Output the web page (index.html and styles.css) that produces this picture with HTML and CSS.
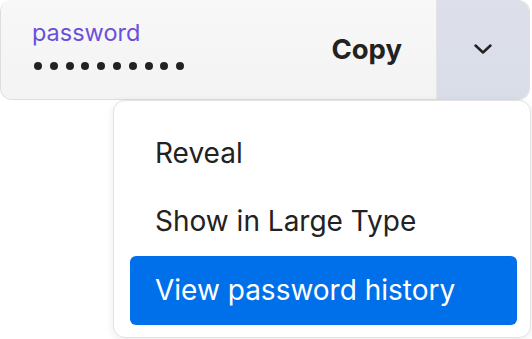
FILE: index.html
```html
<!DOCTYPE html>
<html lang="en">
<head>
    <meta charset="UTF-8">
    <title>Password field</title>
    <link rel="stylesheet" href="styles.css">
</head>
<body>
    <div class="field">
        <div class="field-main">
            <div class="field-text">
                <div class="field-label">password</div>
                <div class="field-dots">
                    <span></span><span></span><span></span><span></span><span></span>
                    <span></span><span></span><span></span><span></span><span></span>
                </div>
            </div>
            <div class="copy">Copy</div>
        </div>
        <div class="field-toggle">
            <svg width="20" height="12" viewBox="0 0 20 12">
                <path d="M2.5 2.5 L10 9.5 L17.5 2.5" fill="none" stroke="#222" stroke-width="2.5" stroke-linecap="round" stroke-linejoin="round"/>
            </svg>
        </div>
    </div>

    <div class="menu">
        <div class="menu-item">Reveal</div>
        <div class="menu-item">Show in Large Type</div>
        <div class="menu-item active">View password history</div>
    </div>
</body>
</html>
```

FILE: styles.css
```css
body {
    margin: 0;
    background-color: #fff;
    font-family: Inter, "Noto Sans", sans-serif;
    color: #222;
}
.field {
    display: flex;
    width: 530px;
    height: 100px;
    border: 1px solid #dedede;
    border-top: none;
    border-radius: 12px;
    overflow: hidden;
    box-sizing: border-box;
}
.field-main {
    flex: 1;
    display: flex;
    align-items: center;
    justify-content: space-between;
    padding: 0 34px 0 31px;
    background: linear-gradient(#f8f8f8, #f3f3f3);
    border-right: 1px solid #e4e4e4;
}
.field-label {
    color: #6b4fdb;
    font-size: 23.5px;
    line-height: 26px;
    margin-top: -10px;
}
.field-dots {
    display: flex;
    gap: 7.8px;
    margin-top: 16px;
    padding-left: 2px;
}
.field-dots span {
    width: 8px;
    height: 8px;
    border-radius: 50%;
    background-color: #222;
}
.copy {
    font-size: 27.5px;
    font-weight: 700;
    margin-top: -2px;
}
.field-toggle {
    width: 92px;
    display: flex;
    align-items: center;
    justify-content: center;
    background: linear-gradient(#dde0ea, #d9dde7);
    padding-bottom: 2px;
}
.menu {
    position: absolute;
    left: 113px;
    top: 100px;
    width: 418px;
    height: 238px;
    box-sizing: border-box;
    background-color: #fff;
    border: 1px solid #e2e2e2;
    border-radius: 12px;
    box-shadow: 0 2px 8px rgba(0, 0, 0, 0.08);
    padding: 18px 13px 0 16px;
}
.menu-item {
    height: 68px;
    line-height: 68px;
    padding-left: 25px;
    font-size: 28px;
    color: #222;
    border-radius: 6px;
}
.menu-item.active {
    height: 69px;
    margin-top: 1px;
    background-color: #0070ea;
    color: #fff;
}
```
